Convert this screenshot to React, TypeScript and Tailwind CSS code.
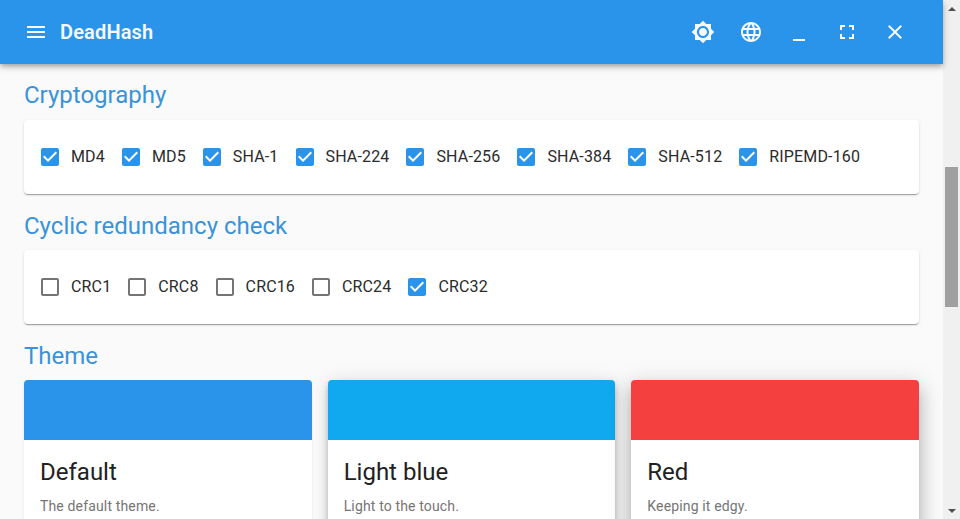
const ICONS = {
  menu: "M3 18h18v-2H3v2zm0-5h18v-2H3v2zm0-7v2h18V6H3z",
  brightness:
    "M20 8.69V4h-4.69L12 .69 8.69 4H4v4.69L.69 12 4 15.31V20h4.69L12 23.31 15.31 20H20v-4.69L23.31 12 20 8.69zM12 18c-3.31 0-6-2.69-6-6s2.69-6 6-6 6 2.69 6 6-2.69 6-6 6zm0-10c-2.21 0-4 1.79-4 4s1.79 4 4 4 4-1.79 4-4-1.79-4-4-4z",
  language:
    "M11.99 2C6.47 2 2 6.48 2 12s4.47 10 9.99 10C17.52 22 22 17.52 22 12S17.52 2 11.99 2zm6.93 6h-2.95c-.32-1.25-.78-2.45-1.38-3.56 1.84.63 3.37 1.91 4.33 3.56zM12 4.04c.83 1.2 1.48 2.53 1.91 3.96h-3.82c.43-1.43 1.08-2.76 1.91-3.96zM4.26 14C4.1 13.36 4 12.69 4 12s.1-1.36.26-2h3.38c-.08.66-.14 1.32-.14 2 0 .68.06 1.34.14 2H4.26zm.82 2h2.95c.32 1.25.78 2.45 1.38 3.56-1.84-.63-3.37-1.9-4.33-3.56zm2.95-8H5.08c.96-1.66 2.49-2.93 4.33-3.56C8.81 5.55 8.35 6.75 8.03 8zM12 19.96c-.83-1.2-1.48-2.53-1.91-3.96h3.82c-.43 1.43-1.08 2.76-1.91 3.96zM14.34 14H9.66c-.09-.66-.16-1.32-.16-2 0-.68.07-1.35.16-2h4.68c.09.65.16 1.32.16 2 0 .68-.07 1.34-.16 2zm.25 5.56c.6-1.11 1.06-2.31 1.38-3.56h2.95c-.96 1.65-2.49 2.93-4.33 3.56zM16.36 14c.08-.66.14-1.32.14-2 0-.68-.06-1.34-.14-2h3.38c.16.64.26 1.31.26 2s-.1 1.36-.26 2h-3.38z",
  minimize: "M6 19h12v2H6z",
  fullscreen: "M7 14H5v5h5v-2H7v-3zm-2-4h2V7h3V5H5v5zm12 7h-3v2h5v-5h-2v3zM14 5v2h3v3h2V5h-5z",
  close:
    "M19 6.41L17.59 5 12 10.59 6.41 5 5 6.41 10.59 12 5 17.59 6.41 19 12 13.41 17.59 19 19 17.59 13.41 12z",
  checked:
    "M19 3H5c-1.11 0-2 .9-2 2v14c0 1.1.89 2 2 2h14c1.11 0 2-.9 2-2V5c0-1.1-.89-2-2-2zm-9 14l-5-5 1.41-1.41L10 14.17l7.59-7.59L19 8l-9 9z",
  unchecked:
    "M19 5v14H5V5h14m0-2H5c-1.1 0-2 .9-2 2v14c0 1.1.9 2 2 2h14c1.1 0 2-.9 2-2V5c0-1.1-.9-2-2-2z",
};

const CRYPTO = ["MD4", "MD5", "SHA-1", "SHA-224", "SHA-256", "SHA-384", "SHA-512", "RIPEMD-160"];
const CRC = [
  { name: "CRC1", on: false },
  { name: "CRC8", on: false },
  { name: "CRC16", on: false },
  { name: "CRC24", on: false },
  { name: "CRC32", on: true },
];

function Icon({ d, className }: { d: string; className?: string }) {
  return (
    <svg viewBox="0 0 24 24" fill="currentColor" className={className}>
      <path d={d} />
    </svg>
  );
}

function HeaderButton({ d }: { d: string }) {
  return (
    <button className="flex h-12 w-12 items-center justify-center text-[#f5fbff]">
      <Icon d={d} className="h-6 w-6" />
    </button>
  );
}

function Check({ label, on = true }: { label: string; on?: boolean }) {
  return (
    <label className="ml-[-11px] mr-4 flex items-center">
      <span className="p-[9px]">
        <Icon
          d={on ? ICONS.checked : ICONS.unchecked}
          className={on ? "h-6 w-6 text-[#2a93ea]" : "h-6 w-6 text-[#757575]"}
        />
      </span>
      <span className="text-base leading-6 tracking-[0.15px] text-[#2b2b2b]">{label}</span>
    </label>
  );
}

function SectionTitle({ children, className = "mb-2" }: { children: string; className?: string }) {
  return <h5 className={`text-2xl leading-8 text-[#3a93d8] ${className}`}>{children}</h5>;
}

function CheckCard({ children }: { children: React.ReactNode }) {
  return (
    <div className="mb-4 flex rounded bg-white p-4 shadow-[0_2px_1px_-1px_rgba(0,0,0,0.2),0_1px_1px_0_rgba(0,0,0,0.14),0_1px_3px_0_rgba(0,0,0,0.12)]">
      {children}
    </div>
  );
}

function ThemeCard({ color, title, text, shadow }: { color: string; title: string; text: string; shadow: string }) {
  return (
    <div className={`rounded bg-white pb-6 ${shadow}`}>
      <div className={`h-[60px] rounded-t ${color}`} />
      <div className="p-4">
        <div className="mb-2 text-2xl leading-8 text-[#212121]">{title}</div>
        <div className="text-sm leading-5 tracking-[0.15px] text-[#757575]">{text}</div>
      </div>
    </div>
  );
}

export default function App() {
  return (
    <div className="flex h-[519px] w-[960px] overflow-hidden bg-[#fafafa] font-['Roboto',sans-serif]">
      <div className="flex min-w-0 flex-1 flex-col">
        <header className="relative z-10 flex h-16 shrink-0 items-center bg-[#2a93ea] pl-3 pr-6 shadow-[0_2px_4px_-1px_rgba(0,0,0,0.2),0_4px_5px_0_rgba(0,0,0,0.14),0_1px_10px_0_rgba(0,0,0,0.12)]">
          <HeaderButton d={ICONS.menu} />
          <div className="text-xl font-semibold tracking-[0.15px] text-[#f5fbff]">DeadHash</div>
          <div className="ml-auto flex">
            <HeaderButton d={ICONS.brightness} />
            <HeaderButton d={ICONS.language} />
            <HeaderButton d={ICONS.minimize} />
            <HeaderButton d={ICONS.fullscreen} />
            <HeaderButton d={ICONS.close} />
          </div>
        </header>

        <main className="px-6 pt-[15px]">
          <SectionTitle className="mb-[9px]">Cryptography</SectionTitle>
          <CheckCard>
            {CRYPTO.map((name) => (
              <Check key={name} label={name} />
            ))}
          </CheckCard>

          <SectionTitle>Cyclic redundancy check</SectionTitle>
          <CheckCard>
            {CRC.map((c) => (
              <Check key={c.name} label={c.name} on={c.on} />
            ))}
          </CheckCard>

          <SectionTitle>Theme</SectionTitle>
          <div className="grid grid-cols-3 gap-4">
            <ThemeCard
              color="bg-[#2a93ea]"
              title="Default"
              text="The default theme."
              shadow="shadow-[0_2px_1px_-1px_rgba(0,0,0,0.1),0_1px_1px_0_rgba(0,0,0,0.07),0_1px_3px_0_rgba(0,0,0,0.06)]"
            />
            <ThemeCard
              color="bg-[#10a8ee]"
              title="Light blue"
              text="Light to the touch."
              shadow="shadow-[0_3px_5px_-1px_rgba(0,0,0,0.2),0_6px_10px_0_rgba(0,0,0,0.14),0_1px_18px_0_rgba(0,0,0,0.12)]"
            />
            <ThemeCard
              color="bg-[#f44140]"
              title="Red"
              text="Keeping it edgy."
              shadow="shadow-[0_7px_8px_-4px_rgba(0,0,0,0.2),0_12px_17px_2px_rgba(0,0,0,0.14),0_5px_22px_4px_rgba(0,0,0,0.12)]"
            />
          </div>
        </main>
      </div>

      {/* Scrollbar */}
      <div className="flex w-[17px] shrink-0 flex-col items-center bg-[#f0f0f0]">
        <div className="flex h-[17px] items-center justify-center">
          <div className="h-0 w-0 border-x-4 border-b-4 border-x-transparent border-b-[#505050]" />
        </div>
        <div className="mt-[150px] h-[140px] w-[13px] bg-[#a0a0a0]" />
        <div className="mt-auto flex h-[17px] items-center justify-center">
          <div className="h-0 w-0 border-x-4 border-t-4 border-x-transparent border-t-[#505050]" />
        </div>
      </div>
    </div>
  );
}
